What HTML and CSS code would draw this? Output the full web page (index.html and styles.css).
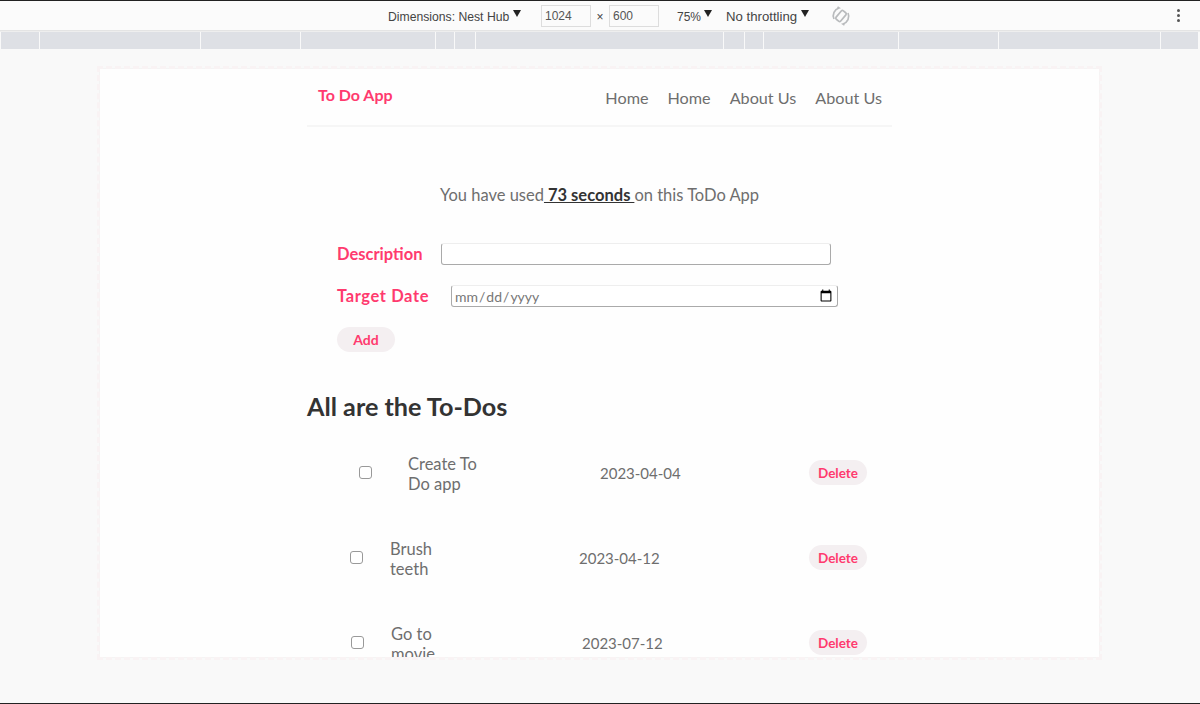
FILE: index.html
```html
<!DOCTYPE html>
<html>
<head>
  <meta charset="UTF-8">
  <link rel="stylesheet" href="styles.css">
  <title>To Do App</title>
</head>
<body>
  <div class="devbar">
    <span class="dev-label dev-dims">Dimensions: Nest Hub</span><span class="caret"></span>
    <input class="dev-input dev-w" type="text" value="1024">
    <span class="dev-times">×</span>
    <input class="dev-input" type="text" value="600">
    <span class="dev-label dev-zoom">75%</span><span class="caret"></span>
    <span class="dev-label dev-throttle">No throttling</span><span class="caret"></span>
    <svg class="dev-rotate" width="20" height="20" viewBox="0 0 20 20" fill="none" stroke="#b9bbbd" stroke-width="1.7">
      <rect x="7" y="4.5" width="6" height="11" rx="1.5" transform="rotate(40 10 10)"/>
      <path d="M3 13a8 8 0 0 1 5-11l-1.500-1M17 7a8 8 0 0 1-5 11l1.500 1"/>
    </svg>
    <span class="dev-more"><i></i><i></i><i></i></span>
  </div>
  <div class="ruler">
    <span class="seg s1"></span><span class="seg s2"></span><span class="seg s3"></span><span class="seg s4"></span>
    <span class="seg s5"></span><span class="seg s6"></span><span class="seg s7"></span><span class="seg s8"></span>
    <span class="seg s9"></span><span class="seg s10"></span><span class="seg s11"></span><span class="seg s12"></span>
    <span class="seg s13"></span>
  </div>
  <div class="stage">
    <div class="screen">
      <div class="container">
        <nav class="navbar">
          <a class="brand">To Do App</a>
          <ul class="nav-links">
            <li>Home</li>
            <li>Home</li>
            <li>About Us</li>
            <li>About Us</li>
          </ul>
        </nav>
        <p class="used">You have used<b> 73 seconds </b>on this ToDo App</p>
        <form class="todo-form">
          <div class="form-row">
            <label class="desc-label" for="desc">Description</label>
            <input class="text-input" type="text" id="desc">
          </div>
          <div class="form-row date-row">
            <label class="date-label" for="target">Target Date</label>
            <input class="date-input" type="date" id="target">
          </div>
          <button class="pill add-btn" type="button">Add</button>
        </form>
        <h2 class="list-title">All are the To-Dos</h2>
        <div class="todo todo-a">
          <input type="checkbox">
          <span class="todo-text">Create To<br>Do app</span>
          <span class="todo-date">2023-04-04</span>
          <button class="pill" type="button">Delete</button>
        </div>
        <div class="todo todo-b">
          <input type="checkbox">
          <span class="todo-text">Brush<br>teeth</span>
          <span class="todo-date">2023-04-12</span>
          <button class="pill" type="button">Delete</button>
        </div>
        <div class="todo todo-c">
          <input type="checkbox">
          <span class="todo-text">Go to<br>movie</span>
          <span class="todo-date">2023-07-12</span>
          <button class="pill" type="button">Delete</button>
        </div>
      </div>
    </div>
  </div>
</body>
</html>
```

FILE: styles.css
```css
html, body {
  height: 100%;
}
body {
  margin: 0;
  height: 704px;
  overflow: hidden;
  display: flex;
  flex-direction: column;
  box-sizing: border-box;
  border-top: 1px solid #222;
  border-bottom: 1px solid #222;
  background-color: #f9f9f9;
  font-family: Lato, "Open Sans", sans-serif;
  color: #6e6e6e;
}

/* devtools bar */
.devbar {
  height: 29px;
  flex: none;
  display: flex;
  align-items: center;
  padding-left: 388px;
  background-color: #fbfbfb;
  border-bottom: 1px solid #e4e4e4;
  font-family: "Liberation Sans", sans-serif;
  font-size: 12px;
  color: #444;
}
.dev-label {
  white-space: nowrap;
  padding-top: 2px;
}
.dev-dims {
  width: 121px;
  font-size: 12.2px;
}
.dev-zoom {
  width: 23px;
  margin-left: 18px;
}
.dev-throttle {
  width: 71px;
  margin-left: 14px;
  font-size: 13.2px;
}
.caret {
  width: 0;
  height: 0;
  margin: -4px 0 0 4px;
  border-left: 4px solid transparent;
  border-right: 4px solid transparent;
  border-top: 7px solid #222;
}
.dev-input {
  width: 50px;
  height: 22px;
  box-sizing: border-box;
  padding: 0 3px;
  border: 1px solid #ddd;
  background: #fbfbfb;
  font-family: "Liberation Sans", sans-serif;
  font-size: 12px;
  color: #555;
}
.dev-w {
  margin-left: 20px;
}
.dev-times {
  width: 18px;
  text-align: center;
  padding-top: 2px;
}
.dev-rotate {
  margin-left: 22px;
}
.dev-more {
  margin-left: 326px;
  display: flex;
  flex-direction: column;
  gap: 2px;
}
.dev-more i {
  width: 3px;
  height: 3px;
  border-radius: 50%;
  background-color: #555;
}

.ruler {
  height: 18px;
  flex: none;
  display: flex;
  gap: 1px;
  padding-left: 1px;
  background-color: #f9f9f9;
  border-top: 1px solid #eee;
  box-sizing: border-box;
}
.seg {
  background-color: #dee0e5;
}
.s1 { width: 38px; }
.s2 { width: 160px; }
.s3 { width: 99px; }
.s4 { width: 134px; }
.s5 { width: 18px; }
.s6 { width: 20px; }
.s7 { width: 247px; }
.s8 { width: 20px; }
.s9 { width: 18px; }
.s10 { width: 134px; }
.s11 { width: 99px; }
.s12 { width: 161px; }
.s13 { width: 37px; }

/* emulated screen */
.stage {
  flex: 1;
  display: flex;
  align-items: flex-start;
  padding: 20px 0 0 100px;
}
.screen {
  width: 999px;
  height: 588px;
  overflow: hidden;
  background-color: #fefefe;
  outline: 3px dashed #f9f3f4;
  box-shadow: 0 0 1px #ddd;
}
.container {
  width: 585px;
  margin-left: 207px;
}

.navbar {
  height: 56px;
  display: flex;
  justify-content: space-between;
  align-items: flex-start;
  border-bottom: 2px solid #f6f6f6;
}
.brand {
  margin: 16px 0 0 11px;
  font-size: 16px;
  font-weight: 700;
  color: #ff3a6e;
}
.nav-links {
  display: flex;
  gap: 19px;
  margin: 19px 10px 0 0;
  padding: 0;
  list-style: none;
  font-size: 16.2px;
}

.used {
  margin: 58px 0 0;
  text-align: center;
  font-size: 16.5px;
  line-height: 20px;
}
.used b {
  color: #333;
  text-decoration: underline;
}

.todo-form {
  margin: 38px 0 0 30px;
}
.form-row {
  display: flex;
  align-items: center;
  height: 22px;
}
.date-row {
  margin-top: 20px;
}
.form-row label {
  font-size: 16.5px;
  font-weight: 700;
  color: #ff3a6e;
}
.desc-label {
  width: 104px;
}
.date-label {
  width: 114px;
  letter-spacing: .6px;
}
.text-input, .date-input {
  height: 22px;
  box-sizing: border-box;
  border: 1px solid #aaa;
  border-top-color: #eee;
  border-radius: 3px;
  background: #fff;
  font-family: Lato, sans-serif;
  font-size: 14px;
  color: #777;
}
.text-input {
  width: 390px;
}
.date-input {
  width: 387px;
  padding: 0 2px;
}

.pill {
  height: 25px;
  padding: 0 6px;
  border: none;
  border-radius: 13px;
  background-color: #f4eff1;
  font-family: Lato, sans-serif;
  font-size: 13.5px;
  font-weight: 700;
  color: #ff3a6e;
}
.add-btn {
  width: 58px;
  margin-top: 20px;
  font-size: 14px;
}

.list-title {
  margin: 40px 0 0;
  font-size: 25.2px;
  line-height: 29px;
  font-weight: 700;
  color: #333;
}

.todo {
  height: 85px;
  display: flex;
  align-items: center;
  font-size: 16.5px;
}
.todo input {
  appearance: none;
  box-sizing: border-box;
  width: 13px;
  height: 13px;
  margin: -3px 0 0;
  flex: none;
  border: 1.5px solid #999;
  border-radius: 3px;
  background: #fff;
}
.todo .pill {
  width: 58px;
  margin: -2px 25px 0 auto;
  flex: none;
}
.todo-text {
  line-height: 20px;
}
.todo-date {
  margin-top: -1px;
  font-size: 15px;
}
.todo-a { margin-top: 10px; }
.todo-a input { margin-left: 52px; }
.todo-a .todo-text { margin-left: 36px; width: 192px; }
.todo-b input { margin-left: 43px; }
.todo-b .todo-text { margin-left: 27px; width: 189px; }
.todo-c input { margin-left: 44px; }
.todo-c .todo-text { margin-left: 27px; width: 191px; }
```
